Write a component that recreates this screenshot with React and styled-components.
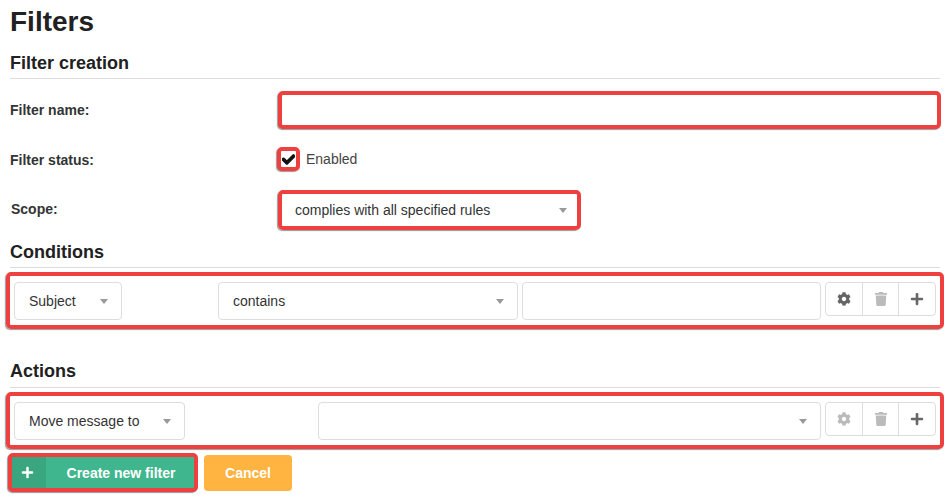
import React from 'react'
import styled, { createGlobalStyle } from 'styled-components'
import { FaCheck, FaCog, FaPlus, FaTrash } from 'react-icons/fa'

const GlobalStyle = createGlobalStyle`
    html, body {
        margin: 0;
        padding: 0;
        background: #fff;
        font-family: "Liberation Sans", Arial, sans-serif;
        color: #333;
        overflow: hidden;
    }
    * {
        box-sizing: border-box;
    }
`;

const Page = styled.div`
    width: 950px;
    height: 498px;
    padding: 0 10px;
`;

const Title = styled.h1`
    margin: 0;
    height: 45px;
    padding-top: 6px;
    font-size: 28px;
    line-height: 32px;
    font-weight: 700;
    color: #212121;
`;

const SectionTitle = styled.h2`
    margin: ${(p) => p.$top || 0}px 0 0;
    height: ${(p) => p.$height || 34}px;
    padding-top: ${(p) => p.$pad}px;
    font-size: 18px;
    line-height: 20px;
    font-weight: 700;
    color: #212121;
    border-bottom: 1px solid #ddd;
`;

const FormRow = styled.div`
    display: grid;
    grid-template-columns: 268px 1fr;
    align-items: center;
    height: ${(p) => p.$height}px;
    margin-top: ${(p) => p.$top || 0}px;
`;

const Label = styled.label`
    font-size: 14px;
    font-weight: 700;
    color: #333;
    padding-left: ${(p) => p.$indent || 0}px;
    padding-top: ${(p) => p.$down || 0}px;
    padding-bottom: ${(p) => p.$up || 0}px;
`;

const Highlight = styled.div`
    border: 4px solid #ef4040;
    border-radius: 5px;
    box-shadow: -1px 1px 1px rgba(70, 70, 70, 0.55);
`;

const NameBox = styled(Highlight)`
    width: 663px;
    height: 38px;
    background: #fff;
`;

const StatusField = styled.div`
    display: flex;
    align-items: center;
    gap: 6px;
    margin-left: -1px;
`;

const CheckBox = styled(Highlight)`
    width: 23px;
    height: 24px;
    background: #fff;
    display: flex;
    align-items: center;
    justify-content: center;
    font-size: 13px;
    color: #111;

    svg {
        stroke: currentColor;
        stroke-width: 40;
    }
`;

const StatusText = styled.span`
    font-size: 14px;
    color: #444;
`;

const ScopeBox = styled(Highlight)`
    width: 303px;
    height: 40px;
    display: flex;
    align-items: center;
    justify-content: space-between;
    padding: 0 10px 0 13px;
    font-size: 14px;
    color: #333;
`;

const Caret = styled.i`
    width: 0;
    height: 0;
    border-left: 4.5px solid transparent;
    border-right: 4.5px solid transparent;
    border-top: 5px solid #999;
`;

const RuleRow = styled(Highlight)`
    display: grid;
    grid-template-columns: ${(p) => p.$columns};
    column-gap: 4px;
    width: 938px;
    height: 57px;
    margin: ${(p) => p.$top || 4}px 0 0 -4px;
    padding: 6px 4px;
`;

const Select = styled.div`
    width: ${(p) => (p.$width ? `${p.$width}px` : '100%')};
    height: 38px;
    display: flex;
    align-items: center;
    justify-content: space-between;
    padding: 0 13px 0 14px;
    border: 1px solid #ddd;
    border-radius: 4px;
    background: #fff;
    font-size: 14px;
    color: #333;
`;

const TextBox = styled.div`
    height: 38px;
    border: 1px solid #ddd;
    border-radius: 4px;
    background: #fff;
`;

const ButtonGroup = styled.div`
    display: flex;
    height: 34px;
    border: 1px solid #ddd;
    border-radius: 4px;
    background: #fff;
`;

const IconButton = styled.div`
    flex: 0 0 ${(p) => p.$width}px;
    display: flex;
    align-items: center;
    justify-content: center;
    font-size: 14px;
    color: ${(p) => (p.$muted ? '#bbb' : '#666')};
    & + & {
        border-left: 1px solid #ddd;
    }
`;

const Footer = styled.div`
    display: flex;
    align-items: center;
    gap: 6px;
    margin: 4px 0 0 -2px;
`;

const CreateOutline = styled(Highlight)`
    width: 190px;
    height: 39px;
    display: flex;
    background: #3fb68e;
    color: #fff;
    font-size: 14px;
    font-weight: 700;
`;

const CreateIcon = styled.span`
    flex: 0 0 34px;
    display: flex;
    align-items: center;
    justify-content: center;
    background: #39a680;
    font-size: 13px;
    padding-right: 3px;
`;

const CreateLabel = styled.span`
    flex: 1;
    display: flex;
    align-items: center;
    justify-content: center;
    padding-left: 2px;
`;

const CancelButton = styled.div`
    width: 88px;
    height: 36px;
    display: flex;
    align-items: center;
    justify-content: center;
    background: #ffb341;
    border-radius: 4px;
    color: #fff;
    font-size: 14px;
    font-weight: 700;
`;

function RowButtons({ settingsMuted }) {
    return (
        <ButtonGroup>
            <IconButton $width={36} $muted={settingsMuted}><FaCog /></IconButton>
            <IconButton $width={36} $muted><FaTrash /></IconButton>
            <IconButton $width={37}><FaPlus /></IconButton>
        </ButtonGroup>
    )
}

export default function App() {
    return (
        <Page>
            <GlobalStyle />
            <Title>Filters</Title>
            <SectionTitle $pad={8}>Filter creation</SectionTitle>
            <FormRow $height={38} $top={12}>
                <Label>Filter name:</Label>
                <NameBox />
            </FormRow>
            <FormRow $height={24} $top={18}>
                <Label $down={2}>Filter status:</Label>
                <StatusField>
                    <CheckBox><FaCheck /></CheckBox>
                    <StatusText>Enabled</StatusText>
                </StatusField>
            </FormRow>
            <FormRow $height={40} $top={19}>
                <Label $indent={1} $up={2}>Scope:</Label>
                <ScopeBox>
                    complies with all specified rules
                    <Caret />
                </ScopeBox>
            </FormRow>
            <SectionTitle $top={8} $height={30} $pad={4}>Conditions</SectionTitle>
            <RuleRow $columns="200px 300px 299px 1fr">
                <Select $width={108}>Subject<Caret /></Select>
                <Select>contains<Caret /></Select>
                <TextBox />
                <RowButtons />
            </RuleRow>
            <SectionTitle $top={24} $height={35} $pad={8}>Actions</SectionTitle>
            <RuleRow $columns="300px 503px 1fr">
                <Select $width={171}>Move message to<Caret /></Select>
                <Select><span /><Caret /></Select>
                <RowButtons settingsMuted />
            </RuleRow>
            <Footer>
                <CreateOutline>
                    <CreateIcon><FaPlus /></CreateIcon>
                    <CreateLabel>Create new filter</CreateLabel>
                </CreateOutline>
                <CancelButton>Cancel</CancelButton>
            </Footer>
        </Page>
    )
}
